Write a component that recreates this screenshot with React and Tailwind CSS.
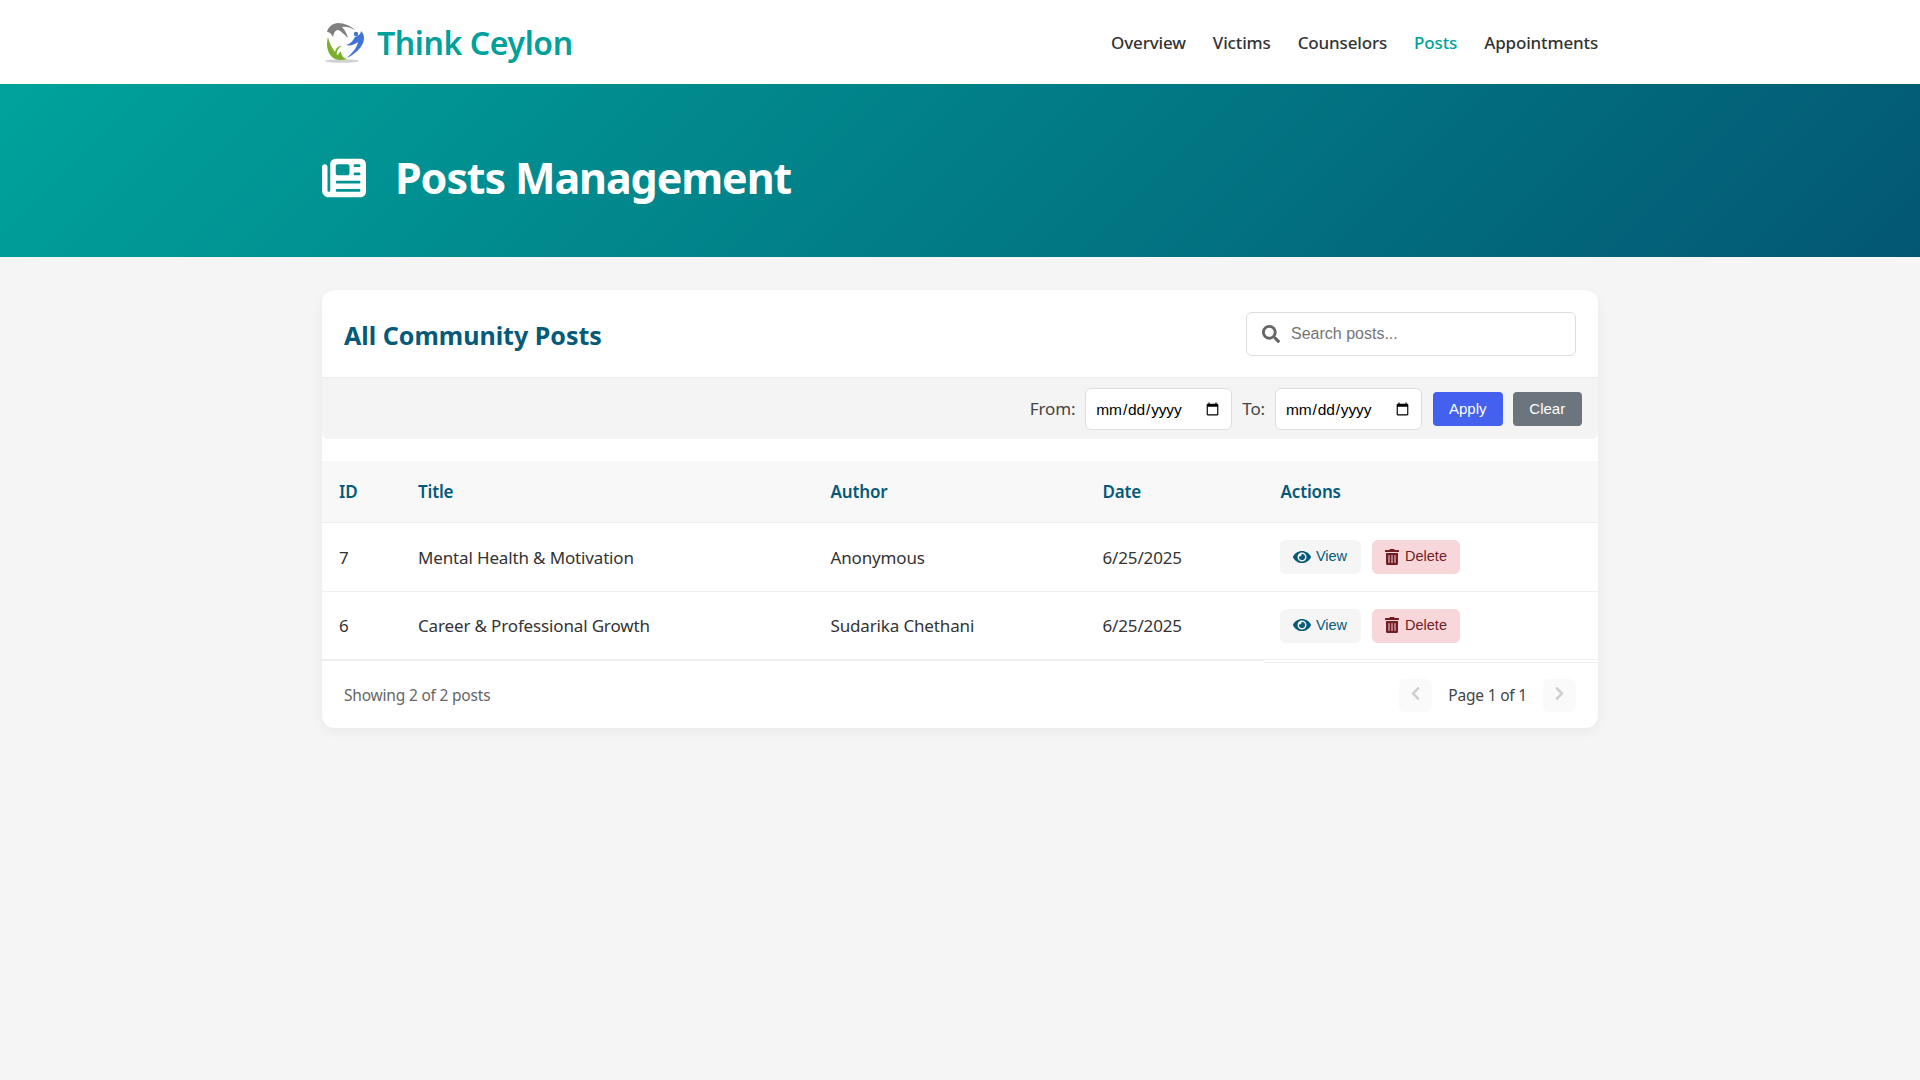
import React from "react";
import { FaSearch, FaEye, FaTrashAlt, FaChevronLeft, FaChevronRight } from "react-icons/fa";
import { FaNewspaper } from "react-icons/fa6";

const navLinks = ["Overview", "Victims", "Counselors", "Posts", "Appointments"];

const posts = [
  { id: 7, title: "Mental Health & Motivation", author: "Anonymous", date: "6/25/2025" },
  { id: 6, title: "Career & Professional Growth", author: "Sudarika Chethani", date: "6/25/2025" },
];

const Logo = () => (
  <svg width="44" height="46" viewBox="0 0 44 46" className="shrink-0">
    <ellipse cx="20" cy="42" rx="17" ry="1.8" fill="#bdbdbd" opacity="0.7" />
    <path d="M5 13 C6 8 11 4 16 4 C22 4 29 7 33 11 C28 8 23 7 20 8 C23 11 25 15 26 19 C22 15 19 12 16 11 C13 11 12 14 11 18 C9 14 7 13 5 13 Z" fill="#7f7f7f" />
    <circle cx="34" cy="15" r="2.2" fill="#3f74d6" />
    <path d="M24 26 C28 25 31 22 33 18 C36 17 39 15 39 12 C42 15 43 19 41 24 C38 31 31 36 25 39 C30 34 35 29 36 23 C32 26 28 27 24 26 Z" fill="#3f74d6" />
    <path d="M6 18 C4 25 5 32 9 37 C12 41 19 42 25 40 C21 39 19 36 19 32 C17 34 16 36 15 36 C14 33 16 29 20 27 C16 27 14 29 13 33 C10 29 7 24 6 18 Z" fill="#7cb02a" />
  </svg>
);

const App = () => {
  return (
    <div className="min-h-screen bg-[#f5f5f5] font-['Noto_Sans',sans-serif] text-[#333]">
      <nav className="h-[84px] bg-white">
        <div className="mx-auto flex h-full w-[1276px] items-center justify-between">
          <div className="flex items-center gap-[11px]">
            <Logo />
            <span className="pt-[2px] text-[32px] font-semibold tracking-[-0.4px] text-[#00a19b]">Think Ceylon</span>
          </div>
          <ul className="flex gap-[27px] pt-[1px] text-[17px] font-medium tracking-[-0.15px]">
            {navLinks.map((link) => (
              <li key={link} className={link === "Posts" ? "text-[#00a19b]" : "text-[#333]"}>
                {link}
              </li>
            ))}
          </ul>
        </div>
      </nav>

      <header className="h-[173px] bg-[linear-gradient(135deg,#00a39b,#035773)] pt-[15px]">
        <div className="mx-auto flex h-full w-[1276px] items-center gap-[29px] text-white">
          <FaNewspaper className="text-[44px]" />
          <h1 className="text-[43px] font-bold tracking-[-1.1px]">Posts Management</h1>
        </div>
      </header>

      <main className="mx-auto mt-[33px] w-[1276px] rounded-xl bg-white shadow-[0_4px_12px_rgba(0,0,0,0.05)]">
        <div className="flex h-[88px] items-center justify-between border-b border-[#eee] px-[22px]">
          <h2 className="pt-[4px] text-[25px] font-bold text-[#045a78]">All Community Posts</h2>
          <div className="relative">
            <FaSearch className="absolute left-[16px] top-[13px] text-[18px] text-[#666]" />
            <input
              type="text"
              placeholder="Search posts..."
              className="h-[44px] w-[330px] rounded-md border border-[#ddd] pl-[44px] font-['Liberation_Sans',sans-serif] text-[16px] outline-none placeholder:text-[#757575]"
            />
          </div>
        </div>

        <div className="flex h-[61px] items-center justify-end gap-[10px] rounded-b-md bg-[#f4f4f4] pr-[16px] text-[17px] tracking-[-0.15px] text-[#444]">
          <label>From:</label>
          <input
            type="date"
            className="h-[42px] w-[147px] rounded-md border border-[#ddd] bg-white px-[9px] pt-[2px] font-['Liberation_Sans',sans-serif] text-[15.5px] text-black"
          />
          <label>To:</label>
          <input
            type="date"
            className="h-[42px] w-[147px] rounded-md border border-[#ddd] bg-white px-[9px] pt-[2px] font-['Liberation_Sans',sans-serif] text-[15.5px] text-black"
          />
          <button className="ml-[1px] h-[34px] w-[69.5px] rounded bg-[#4361ee] pt-[1px] font-['Liberation_Sans',sans-serif] text-[15px] tracking-normal text-white">
            Apply
          </button>
          <button className="h-[34px] w-[69.5px] rounded bg-[#6c757d] pt-[1px] font-['Liberation_Sans',sans-serif] text-[15px] tracking-normal text-white">
            Clear
          </button>
        </div>

        <table className="mt-[22px] w-full table-fixed border-collapse text-left text-[17px] tracking-[-0.15px]">
          <thead className="bg-[#f8f8f8] text-[#045a78]">
            <tr className="h-[61.5px] border-b border-[#eee]">
              <th className="w-[79px] pl-[17px] font-semibold">ID</th>
              <th className="w-[412.5px] pl-[17px] font-semibold">Title</th>
              <th className="w-[272px] pl-[17px] font-semibold">Author</th>
              <th className="w-[178px] pl-[17px] font-semibold">Date</th>
              <th className="pl-[17px] font-semibold">Actions</th>
            </tr>
          </thead>
          <tbody>
            {posts.map((post, i) => {
              const last = i === posts.length - 1;
              const cell = last
                ? "border-b-2 border-[#eee] pl-[17px] pt-[2px]"
                : "border-b border-[#eee] pl-[17px] pt-[2px]";
              return (
                <tr key={post.id} className="h-[68.5px]">
                  <td className={cell}>{post.id}</td>
                  <td className={cell}>{post.title}</td>
                  <td className={cell}>{post.author}</td>
                  <td className={cell}>{post.date}</td>
                  <td className="border-b border-[#eee] pl-[16px] pt-[1px]">
                    <div className="flex gap-[11px] font-['Liberation_Sans',sans-serif] text-[14.5px] tracking-normal">
                      <button className="flex h-[34px] w-[81px] items-center justify-center gap-[5px] rounded-md bg-[#f5f5f5] text-[#045a78]">
                        <FaEye className="-mt-[1px] text-[18px]" />
                        View
                      </button>
                      <button className="flex h-[34px] w-[88px] items-center justify-center gap-[5px] rounded-md bg-[#f8d7da] text-[#721c24]">
                        <FaTrashAlt className="-mt-[1px] text-[16px]" />
                        Delete
                      </button>
                    </div>
                  </td>
                </tr>
              );
            })}
          </tbody>
        </table>

        <div className="relative flex h-[67px] items-center justify-between px-[22px] pt-[2px]">
          <div className="absolute right-0 top-[1px] h-px w-[334px] bg-[#eee]" />
          <span className="pt-[1px] text-[15.5px] tracking-[-0.2px] text-[#666]">Showing 2 of 2 posts</span>
          <div className="flex items-center gap-[16px]">
            <button className="flex h-[33px] w-[33px] items-center justify-center rounded-md bg-[#fafafa] pb-[3px] text-[#ccc]">
              <FaChevronLeft className="text-[15px]" />
            </button>
            <span className="pt-[1px] text-[15.5px] tracking-[-0.2px] text-[#444]">Page 1 of 1</span>
            <button className="flex h-[33px] w-[33px] items-center justify-center rounded-md bg-[#fafafa] pb-[3px] text-[#ccc]">
              <FaChevronRight className="text-[15px]" />
            </button>
          </div>
        </div>
      </main>
    </div>
  );
};

export default App;
